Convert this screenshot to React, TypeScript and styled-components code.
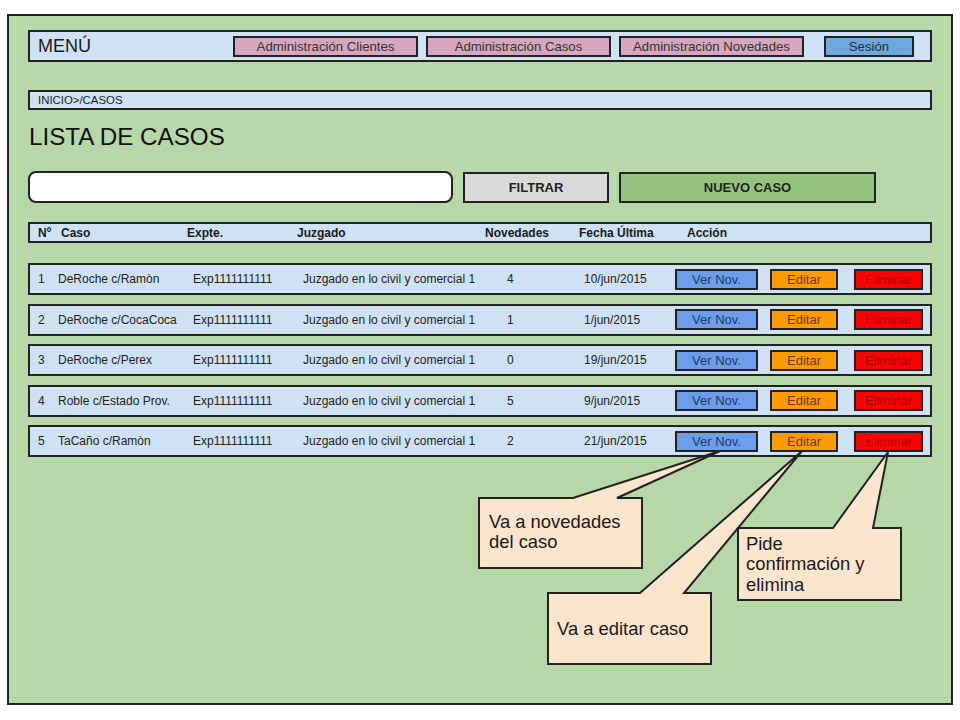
import React from "react";
import styled, { createGlobalStyle, css } from "styled-components";

const GlobalStyle = createGlobalStyle`
  html, body { margin: 0; padding: 0; background: #ffffff; }
  body { font-family: "Liberation Sans", Arial, sans-serif; color: #222; }
  *, *::before, *::after { box-sizing: border-box; }
`;

const INK = "#222";

const Page = styled.div`
  position: relative;
  width: 960px;
  height: 720px;
  padding: 14px 7px 15px 7px;
`;

const Frame = styled.div`
  width: 946px;
  height: 691px;
  background: #b6d7a8;
  border: 2px solid ${INK};
  padding: 14px 19px 0 19px;
  display: flex;
  flex-direction: column;
`;

const MenuBar = styled.div`
  height: 32px;
  background: #cfe2f3;
  border: 2px solid ${INK};
  display: flex;
  align-items: center;
  padding: 0 16px 0 8px;
`;

const MenuLabel = styled.div`
  flex: 1;
  font-size: 18px;
  color: #1a1a1a;
`;

const Nav = styled.nav`
  display: flex;
  align-items: center;
  gap: 8px;
`;

const MenuButton = styled.div<{ $w: number; $variant: "pink" | "blue" }>`
  width: ${(p) => p.$w}px;
  height: 21px;
  border: 2px solid ${INK};
  display: flex;
  align-items: center;
  justify-content: center;
  font-size: 13.2px;
  ${(p) =>
    p.$variant === "pink"
      ? css`
          background: #d5a6bd;
          color: #333;
        `
      : css`
          background: #6fa8dc;
          color: #1e2f45;
          margin-left: 12px;
        `}
`;

const Breadcrumb = styled.div`
  margin-top: 28px;
  height: 20px;
  background: #cfe2f3;
  border: 2px solid ${INK};
  display: flex;
  align-items: center;
  padding-left: 8px;
  font-size: 11.4px;
  color: #1a1a1a;
`;

const Title = styled.h1`
  margin: 13px 0 0 1px;
  font-size: 24.2px;
  line-height: 28px;
  font-weight: normal;
  color: #111;
`;

const SearchRow = styled.div`
  margin-top: 20px;
  display: flex;
  align-items: center;
`;

const SearchBox = styled.div`
  width: 425px;
  height: 32px;
  background: #ffffff;
  border: 2px solid ${INK};
  border-radius: 8px;
`;

const ActionButton = styled.div<{ $w: number; $bg: string; $ml: number }>`
  width: ${(p) => p.$w}px;
  height: 31px;
  margin-left: ${(p) => p.$ml}px;
  background: ${(p) => p.$bg};
  border: 2px solid ${INK};
  display: flex;
  align-items: center;
  justify-content: center;
  font-size: 13px;
  font-weight: bold;
  color: #222;
`;

const HeaderRow = styled.div`
  margin-top: 19px;
  height: 21px;
  background: #cfe2f3;
  border: 2px solid ${INK};
  display: grid;
  grid-template-columns: 23px 126px 110px 188px 94px 108px 1fr;
  align-items: center;
  padding-left: 8px;
  font-size: 12px;
  font-weight: bold;
  color: #1a1a1a;
`;

const RowList = styled.div`
  margin-top: 20px;
  display: flex;
  flex-direction: column;
  gap: 8.5px;
`;

const DataRow = styled.div`
  height: 32px;
  background: #cfe2f3;
  border: 2px solid ${INK};
  display: grid;
  grid-template-columns: 20px 135px 110px 204px 77px 91px 1fr;
  align-items: center;
  padding-left: 8px;
  font-size: 12px;
  color: #222;
  white-space: nowrap;
`;

const Actions = styled.div`
  display: flex;
  align-items: center;
`;

type Kind = "ver" | "editar" | "eliminar";

const kindStyles: Record<Kind, ReturnType<typeof css>> = {
  ver: css`
    width: 83px;
    background: #6d9eeb;
    color: #1c3a6b;
  `,
  editar: css`
    width: 68px;
    margin-left: 12px;
    background: #ff9900;
    color: #6b3a07;
  `,
  eliminar: css`
    width: 69px;
    margin-left: 16px;
    background: #ff0000;
    color: #990000;
  `,
};

const RowButton = styled.div<{ $kind: Kind }>`
  height: 21px;
  border: 2px solid ${INK};
  display: flex;
  align-items: center;
  justify-content: center;
  font-size: 13px;
  ${(p) => kindStyles[p.$kind]}
`;

const Overlay = styled.div`
  position: absolute;
  inset: 0;
  pointer-events: none;
`;

const CalloutSvg = styled.svg`
  position: absolute;
  left: 0;
  top: 0;
`;

const CalloutText = styled.div<{ $x: number; $y: number }>`
  position: absolute;
  left: ${(p) => p.$x}px;
  top: ${(p) => p.$y}px;
  font-size: 18.4px;
  line-height: 20.4px;
  color: #1a1a1a;
  white-space: nowrap;
`;

const cases = [
  { n: 1, caso: "DeRoche c/Ramòn", nov: 4, fecha: "10/jun/2015" },
  { n: 2, caso: "DeRoche c/CocaCoca", nov: 1, fecha: "1/jun/2015" },
  { n: 3, caso: "DeRoche c/Perex", nov: 0, fecha: "19/jun/2015" },
  { n: 4, caso: "Roble c/Estado Prov.", nov: 5, fecha: "9/jun/2015" },
  { n: 5, caso: "TaCaño c/Ramòn", nov: 2, fecha: "21/jun/2015" },
];

const callouts = [
  {
    points: "479,498 573,498 720,451 617,498 642,498 642,568 479,568",
    x: 489,
    y: 512,
    lines: ["Va a novedades", "del caso"],
  },
  {
    points: "548,593 640,593 802,451 684,593 711,593 711,664 548,664",
    x: 557,
    y: 619,
    lines: ["Va a editar caso"],
  },
  {
    points: "738,528 833,528 888,452 873,528 901,528 901,600 738,600",
    x: 746,
    y: 534,
    lines: ["Pide", "confirmación y", "elimina"],
  },
];

export default function App() {
  return (
    <>
      <GlobalStyle />
      <Page>
        <Frame>
          <MenuBar>
            <MenuLabel>MENÚ</MenuLabel>
            <Nav>
              <MenuButton $w={185} $variant="pink">
                Administración Clientes
              </MenuButton>
              <MenuButton $w={185} $variant="pink">
                Administración Casos
              </MenuButton>
              <MenuButton $w={185} $variant="pink">
                Administración Novedades
              </MenuButton>
              <MenuButton $w={90} $variant="blue">
                Sesión
              </MenuButton>
            </Nav>
          </MenuBar>
          <Breadcrumb>INICIO&gt;/CASOS</Breadcrumb>
          <Title>LISTA DE CASOS</Title>
          <SearchRow>
            <SearchBox />
            <ActionButton $w={146} $bg="#d9d9d9" $ml={10}>
              FILTRAR
            </ActionButton>
            <ActionButton $w={257} $bg="#93c47d" $ml={10}>
              NUEVO CASO
            </ActionButton>
          </SearchRow>
          <HeaderRow>
            <span>Nº</span>
            <span>Caso</span>
            <span>Expte.</span>
            <span>Juzgado</span>
            <span>Novedades</span>
            <span>Fecha Última</span>
            <span>Acción</span>
          </HeaderRow>
          <RowList>
            {cases.map((c) => (
              <DataRow key={c.n}>
                <span>{c.n}</span>
                <span>{c.caso}</span>
                <span>Exp1111111111</span>
                <span>Juzgado en lo civil y comercial 1</span>
                <span>{c.nov}</span>
                <span>{c.fecha}</span>
                <Actions>
                  <RowButton $kind="ver">Ver Nov.</RowButton>
                  <RowButton $kind="editar">Editar</RowButton>
                  <RowButton $kind="eliminar">Eliminar</RowButton>
                </Actions>
              </DataRow>
            ))}
          </RowList>
        </Frame>
        <Overlay>
          <CalloutSvg width={960} height={720} viewBox="0 0 960 720">
            {callouts.map((c, i) => (
              <polygon
                key={i}
                points={c.points}
                fill="#fce5cd"
                stroke={INK}
                strokeWidth={2}
                strokeLinejoin="miter"
              />
            ))}
          </CalloutSvg>
          {callouts.map((c, i) => (
            <CalloutText key={i} $x={c.x} $y={c.y}>
              {c.lines.map((l, j) => (
                <div key={j}>{l}</div>
              ))}
            </CalloutText>
          ))}
        </Overlay>
      </Page>
    </>
  );
}
